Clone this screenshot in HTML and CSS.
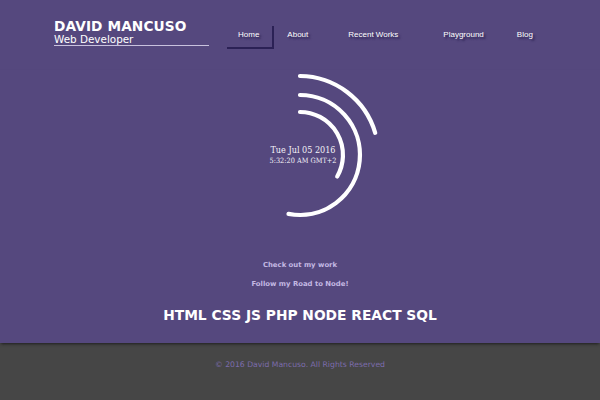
FILE: index.html
```html
<!DOCTYPE html>
<html>
<head>
<meta charset="utf-8">
<link rel="stylesheet" href="styles.css">
</head>
<body>
<div class="page">
  <header class="header">
    <div class="brand">
      <h1 class="name">DAVID MANCUSO</h1>
      <div class="role">Web Developer</div>
    </div>
    <nav class="nav">
      <a class="nav-item nav-home active">Home</a>
      <a class="nav-item nav-about">About</a>
      <a class="nav-item nav-works">Recent Works</a>
      <a class="nav-item nav-play">Playground</a>
      <a class="nav-item nav-blog">Blog</a>
    </nav>
  </header>
  <section class="hero">
    <div class="clock">
      <svg class="arcs" width="200" height="160" viewBox="0 0 200 160">
        <g fill="none" stroke="#ffffff" stroke-width="4.2" stroke-linecap="round">
          <path d="M100 6 A79 79 0 0 1 175.2 62.8"/>
          <path d="M100 25 A60 60 0 1 1 88.5 143.9"/>
          <path d="M100 42 A43 43 0 0 1 137.2 106.5"/>
        </g>
      </svg>
      <div class="date">
        <div class="date-day">Tue Jul 05 2016</div>
        <div class="date-time">5:32:20 AM GMT+2</div>
      </div>
    </div>
    <div class="links">
      <a class="link">Check out my work</a>
      <a class="link">Follow my Road to Node!</a>
    </div>
    <div class="skills">HTML CSS JS PHP NODE REACT SQL</div>
  </section>
  <footer class="footer">© 2016 David Mancuso. All Rights Reserved</footer>
</div>
</body>
</html>
```
FILE: styles.css
```css
html, body {
  margin: 0;
  padding: 0;
}
body {
  background: #464646;
  font-family: "DejaVu Sans", sans-serif;
}
.page {
  width: 600px;
  height: 400px;
  display: flex;
  flex-direction: column;
  overflow: hidden;
}
.header {
  background: #55487e;
  display: flex;
  align-items: flex-start;
  padding: 19px 0 0 54px;
  height: 51px;
}
.brand {
  width: 155px;
  border-bottom: 1px solid #c9c2de;
}
.name {
  margin: 0;
  font-size: 13.7px;
  font-weight: bold;
  color: #ffffff;
  line-height: 15px;
  letter-spacing: 0.1px;
}
.role {
  color: #ffffff;
  font-size: 10.4px;
  line-height: 11px;
}
.nav {
  display: flex;
  align-items: flex-start;
  margin-left: 16px;
  margin-top: 5px;
}
.nav-item {
  font-family: "Liberation Sans", Arial, sans-serif;
  font-size: 8px;
  color: #ffffff;
  padding: 6px 13px 8px;
  height: 9px;
  line-height: 9px;
  text-shadow: 2px 2px 2px #2a2050;
}
.nav-home.active {
  box-shadow: 2px 2px 0 #2b2155;
}
.nav-about { margin-left: 2px; }
.nav-works { margin-left: 14px; }
.nav-play { margin-left: 19px; }
.nav-blog { margin-left: 7px; }
.hero {
  background: #55487e;
  height: 273px;
  display: flex;
  flex-direction: column;
  align-items: center;
  box-shadow: 0 2px 3px -1px #1e1e1e;
  position: relative;
  z-index: 1;
}
.clock {
  display: grid;
  width: 200px;
  height: 160px;
}
.arcs, .date {
  grid-area: 1 / 1;
}
.date {
  align-self: center;
  justify-self: center;
  margin-left: 6px;
  margin-top: 10px;
  text-align: center;
  color: #f4f2f8;
  font-family: "DejaVu Serif Condensed", "DejaVu Serif", serif;
  font-stretch: condensed;
}
.date-day {
  font-size: 9px;
  line-height: 12px;
}
.date-time {
  font-size: 7.3px;
  line-height: 10px;
}
.links {
  display: flex;
  flex-direction: column;
  align-items: center;
  gap: 10px;
  margin-top: 31px;
}
.link {
  font-size: 6.9px;
  font-weight: bold;
  color: #c3b8e3;
  line-height: 9px;
}
.skills {
  margin-top: 17px;
  font-size: 13.8px;
  font-weight: bold;
  color: #ffffff;
  line-height: 18px;
}
.footer {
  flex: 1;
  background: #464646;
  text-align: center;
  color: #7c6cac;
  font-size: 7.7px;
  padding-top: 17px;
  line-height: 10px;
}
```
